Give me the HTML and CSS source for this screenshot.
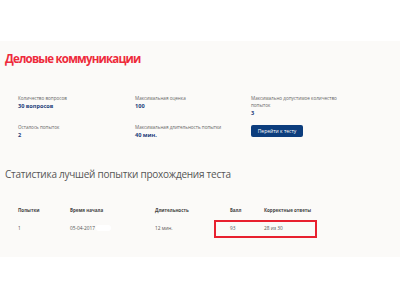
FILE: index.html
```html
<!DOCTYPE html>
<html lang="ru">
<head>
<meta charset="utf-8">
<link rel="stylesheet" href="styles.css">
</head>
<body>
<div class="top"></div>
<main class="panel">
  <h1 class="title">Деловые коммуникации</h1>
  <div class="info">
    <div class="cell">
      <div class="label">Количество вопросов</div>
      <div class="value">30 вопросов</div>
    </div>
    <div class="cell">
      <div class="label">Максимальная оценка</div>
      <div class="value">100</div>
    </div>
    <div class="cell wrap">
      <div class="label">Максимально допустимое количество попыток</div>
      <div class="value">3</div>
    </div>
    <div class="cell">
      <div class="label">Осталось попыток</div>
      <div class="value">2</div>
    </div>
    <div class="cell">
      <div class="label">Максимальная длительность попытки</div>
      <div class="value">40 мин.</div>
    </div>
    <div class="cell">
      <button class="btn">Перейти к тесту</button>
    </div>
  </div>
  <h2 class="stats">Статистика лучшей попытки прохождения теста</h2>
  <div class="table">
    <div class="row head">
      <span class="c1">Попытки</span>
      <span class="c2">Время начала</span>
      <span class="c3">Длительность</span>
      <span class="c4">Балл</span>
      <span class="c5">Корректные ответы</span>
    </div>
    <div class="row body">
      <span class="c1">1</span>
      <span class="c2">05-04-2017 <span class="blot"></span></span>
      <span class="c3">12 мин.</span>
      <span class="c4">93</span>
      <span class="c5">28 из 30</span>
    </div>
    <div class="mark"></div>
  </div>
</main>
</body>
</html>
```

FILE: styles.css
```css
* { box-sizing: border-box; }
body {
  margin: 0;
  background: #fff;
  font-family: "Open Sans", "Noto Sans", sans-serif;
  width: 400px;
  height: 300px;
  overflow: hidden;
}
.top { height: 41px; background: #fff; }
.panel {
  background: #fbfaf8;
  height: 216px;
  padding: 10px 0 0 5px;
}
.title {
  margin: 0;
  font-size: 11.5px;
  line-height: 16px;
  font-weight: 700;
  color: #ee2a3b;
  letter-spacing: -0.8px;
}
.info {
  display: grid;
  grid-template-columns: 117px 116px 90px;
  grid-auto-rows: 29px;
  margin: 28px 0 0 13px;
}
.cell { display: flex; flex-direction: column; }
.label {
  font-size: 4.6px;
  line-height: 6.5px;
  color: #666;
}
.value {
  margin-top: 1.5px;
  font-size: 5.6px;
  line-height: 7px;
  font-weight: 700;
  color: #1c3d7a;
}
.btn {
  margin-top: 1px;
  width: 52px;
  height: 12px;
  padding: 0;
  border: 0;
  border-radius: 2px;
  background: #0c3d7d;
  color: #fff;
  font-family: inherit;
  font-size: 5px;
}
.stats {
  margin: 14px 0 0 0;
  font-size: 10px;
  line-height: 14px;
  font-weight: 400;
  color: #555;
  letter-spacing: -0.25px;
}
.table {
  position: relative;
  margin: 24px 0 0 13px;
}
.row {
  display: grid;
  grid-template-columns: 52px 85px 75px 34px 60px;
  align-items: center;
}
.row.head { height: 10px; font-weight: 700; color: #444; font-size: 4.5px; }
.row.body { height: 18px; margin-top: 4px; color: #555; font-size: 4.8px; }
.blot {
  display: inline-block;
  width: 15px;
  height: 6px;
  background: #fff;
  border-radius: 3px;
  vertical-align: middle;
}
.mark {
  position: absolute;
  left: 196px;
  top: 15px;
  width: 103px;
  height: 18px;
  border: 2px solid #e8202f;
}
```
